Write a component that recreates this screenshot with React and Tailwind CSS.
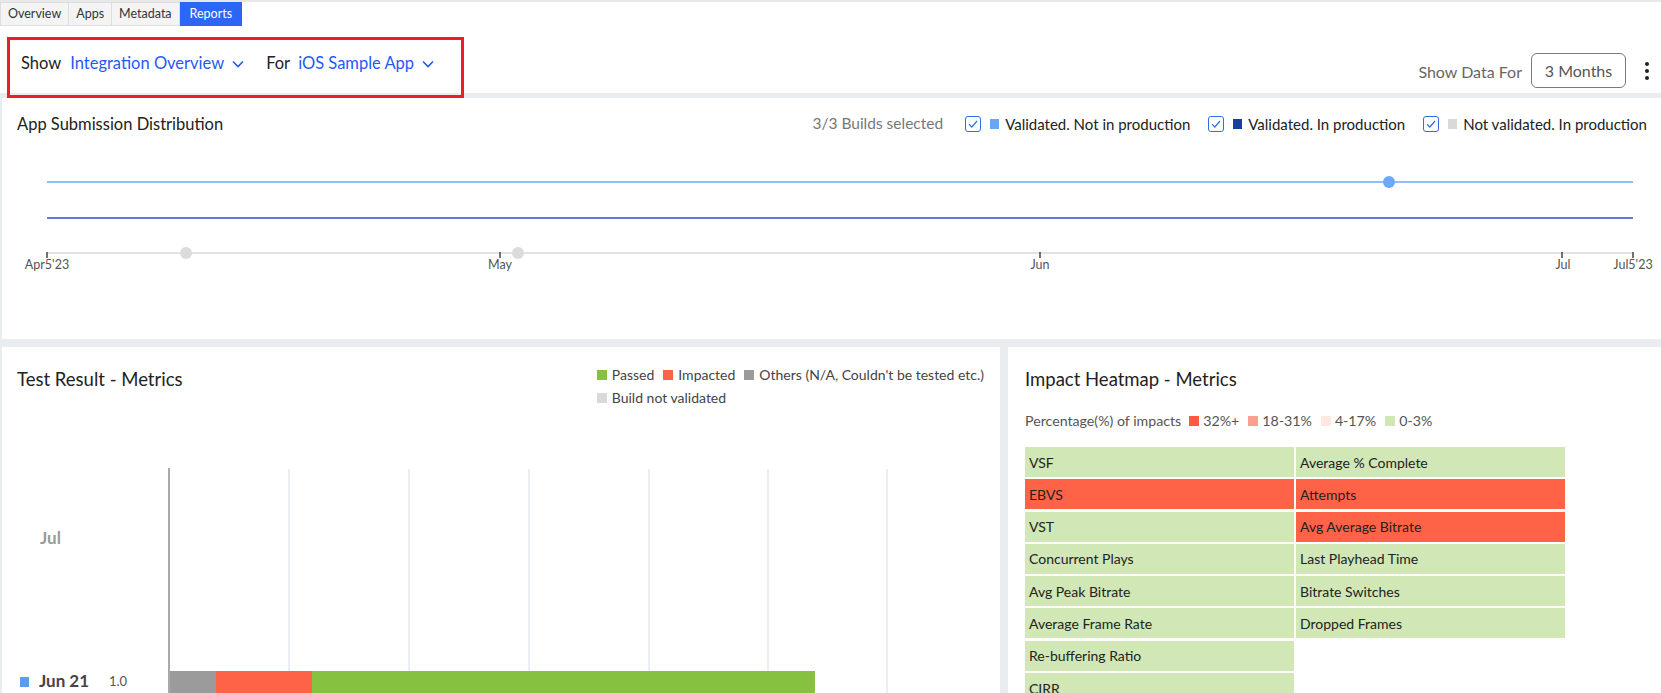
import React from "react";

function Chevron() {
  return (
    <svg width="12" height="8" viewBox="0 0 12 8" className="ml-[8px] mt-[2px]">
      <polyline points="1,1.5 6,6.5 11,1.5" fill="none" stroke="#1f5af5" strokeWidth="1.6" />
    </svg>
  );
}

function Check() {
  return (
    <div className="w-[16px] h-[16px] rounded-[3px] border border-[#2f6fe0] flex items-center justify-center bg-white">
      <svg width="10" height="8" viewBox="0 0 10 8">
        <polyline points="1,4.2 3.8,7 9,1" fill="none" stroke="#2f6fe0" strokeWidth="1.2" />
      </svg>
    </div>
  );
}

function LegendItem({ color, label }) {
  return (
    <div className="flex items-center">
      <Check />
      <span className={`w-[9px] h-[10px] ml-[9px] ${color}`}></span>
      <span className="ml-[6px] text-[15px] text-[#222]">{label}</span>
    </div>
  );
}

const cells = [
  ["VSF", "g"], ["Average % Complete", "g"],
  ["EBVS", "r"], ["Attempts", "r"],
  ["VST", "g"], ["Avg Average Bitrate", "r"],
  ["Concurrent Plays", "g"], ["Last Playhead Time", "g"],
  ["Avg Peak Bitrate", "g"], ["Bitrate Switches", "g"],
  ["Average Frame Rate", "g"], ["Dropped Frames", "g"],
  ["Re-buffering Ratio", "g"], [null, null],
  ["CIRR", "g"], [null, null],
];

export default function App() {
  const grid = [287, 407, 527, 647, 766, 885];
  return (
    <div className="w-[1661px] h-[693px] overflow-hidden bg-[#e9edf0] font-[Lato,'Noto_Sans',sans-serif] text-[#222] relative">
      {/* top area */}
      <div className="bg-white border-t-2 border-[#e6e8ea]">
        <div className="flex h-[24px] text-[12.5px]">
          <div className="px-[7px] flex items-center bg-[#f4f4f5] border border-[#dedede] text-[#333]">Overview</div>
          <div className="px-[7px] flex items-center bg-[#f4f4f5] border border-l-0 border-[#dedede] text-[#333]">Apps</div>
          <div className="px-[7px] flex items-center bg-[#f4f4f5] border border-l-0 border-[#dedede] text-[#333]">Metadata</div>
          <div className="px-[10px] flex items-center bg-[#2d66f6] text-white">Reports</div>
        </div>
        <div className="h-[67px] flex justify-between">
          <div className="flex items-center pl-[21px] pt-[25px] self-start text-[16.5px] leading-6">
            <span className="text-[#222]">Show</span>
            <span className="ml-[9px] text-[#1f5af5]">Integration Overview</span>
            <Chevron />
            <span className="ml-[22px] text-[#222]">For</span>
            <span className="ml-[8px] text-[#1f5af5]">iOS Sample App</span>
            <Chevron />
          </div>
          <div className="flex items-center self-start mt-[27px] pr-[12px]">
            <span className="text-[16px] text-[#666] mt-[2px]">Show Data For</span>
            <div className="ml-[9px] w-[95px] h-[35px] border border-[#7a7a7a] rounded-[6px] flex items-center justify-center text-[16px] text-[#555]">3 Months</div>
            <div className="ml-[19px] flex flex-col gap-[3px]">
              <span className="w-[4px] h-[4px] rounded-full bg-[#222]"></span>
              <span className="w-[4px] h-[4px] rounded-full bg-[#222]"></span>
              <span className="w-[4px] h-[4px] rounded-full bg-[#222]"></span>
            </div>
          </div>
        </div>
      </div>

      {/* App Submission Distribution */}
      <div className="mt-[5px] ml-[2px] h-[241px] bg-white">
        <div className="h-[52px] flex items-center justify-between pl-[15px] pr-[14px]">
          <span className="text-[16.5px]">App Submission Distribution</span>
          <div className="flex items-center gap-[18px]">
            <span className="text-[15.5px] text-[#777] mr-[4px]">3/3 Builds selected</span>
            <LegendItem color="bg-[#6aa6f8]" label="Validated. Not in production" />
            <LegendItem color="bg-[#173f9e]" label="Validated. In production" />
            <LegendItem color="bg-[#d9d9d9]" label="Not validated. In production" />
          </div>
        </div>
        <svg width="1659" height="189" className="block">
          <line x1="45" y1="32" x2="1631" y2="32" stroke="#93bdf8" strokeWidth="2" />
          <line x1="45" y1="68" x2="1631" y2="68" stroke="#5a7fd0" strokeWidth="2" />
          <line x1="45" y1="103" x2="1631" y2="103" stroke="#e3e3e3" strokeWidth="2" />
          {[45, 498, 1038, 1560, 1631].map((x) => (
            <line key={x} x1={x} y1="102" x2={x} y2="108" stroke="#444" strokeWidth="1.5" />
          ))}
          <circle cx="184" cy="103" r="6" fill="#dcdcdc" />
          <circle cx="516" cy="103" r="6" fill="#dcdcdc" />
          <circle cx="1387" cy="32" r="6" fill="#6ea8fc" />
          <g fontSize="12.5" fill="#555" textAnchor="middle">
            <text x="45" y="119">Apr5'23</text>
            <text x="498" y="119">May</text>
            <text x="1038" y="119">Jun</text>
            <text x="1561" y="119">Jul</text>
            <text x="1631" y="119">Jul5'23</text>
          </g>
        </svg>
      </div>

      {/* bottom panels */}
      <div className="flex mt-[8px] h-[346px]">
        <div className="ml-[2px] w-[998px] bg-white">
          <div className="h-[63px] flex justify-between pl-[15px] pr-[16px] pt-[16px]">
            <span className="mt-[4px] text-[18.5px] leading-6">Test Result - Metrics</span>
            <div className="flex flex-col items-start text-[14px] text-[#444] leading-[23px]">
              <div className="flex items-center">
                <span className="w-[10px] h-[10px] bg-[#86c13f]"></span>
                <span className="ml-[5px]">Passed</span>
                <span className="ml-[9px] w-[10px] h-[10px] bg-[#ff6347]"></span>
                <span className="ml-[5px]">Impacted</span>
                <span className="ml-[9px] w-[10px] h-[10px] bg-[#9b9b9b]"></span>
                <span className="ml-[5px]">Others (N/A, Couldn't be tested etc.)</span>
              </div>
              <div className="flex items-center">
                <span className="w-[10px] h-[10px] bg-[#d9d9d9]"></span>
                <span className="ml-[5px]">Build not validated</span>
              </div>
            </div>
          </div>
          <svg width="998" height="283" className="block">
            {grid.map((x) => (
              <line key={x} x1={x} y1="59" x2={x} y2="283" stroke="#e6e9f2" strokeWidth="1.5" />
            ))}
            <line x1="167" y1="58" x2="167" y2="283" stroke="#8c8c8c" strokeWidth="1.5" />
            <text x="38" y="134" fontSize="17" fontWeight="700" fill="#9a9a9a">Jul</text>
            <rect x="168" y="261" width="46" height="30" fill="#9b9b9b" />
            <rect x="214" y="261" width="96" height="30" fill="#ff6347" />
            <rect x="310" y="261" width="503" height="30" fill="#86c13f" />
            <rect x="18" y="267" width="9" height="10" fill="#5b9cf5" />
            <text x="37" y="277" fontSize="17" fontWeight="700" fill="#444">Jun 21</text>
            <text x="107" y="276" fontSize="13" fill="#555">1.0</text>
          </svg>
        </div>
        <div className="ml-[8px] flex-1 bg-white pl-[17px] pt-[20px]">
          <div className="text-[18.5px] leading-6">Impact Heatmap - Metrics</div>
          <div className="mt-[20px] h-[20px] flex items-center text-[14.2px] text-[#555]">
            <span>Percentage(%) of impacts</span>
            <span className="ml-[8px] w-[10px] h-[10px] bg-[#ff5a3c]"></span>
            <span className="ml-[4px]">32%+</span>
            <span className="ml-[9px] w-[10px] h-[10px] bg-[#f9a090]"></span>
            <span className="ml-[4px]">18-31%</span>
            <span className="ml-[9px] w-[10px] h-[10px] bg-[#fde8e4]"></span>
            <span className="ml-[4px]">4-17%</span>
            <span className="ml-[9px] w-[10px] h-[10px] bg-[#d1e7b6]"></span>
            <span className="ml-[4px]">0-3%</span>
          </div>
          <div className="mt-[16px] grid grid-cols-[269px_269px] gap-x-[2px] gap-y-[2.3px]">
            {cells.map(([label, c], i) => (
              <div
                key={i}
                className={`h-[30px] flex items-center pl-[4px] text-[14px] text-[#222] ${
                  c === "r" ? "bg-[#ff6347]" : c === "g" ? "bg-[#d1e7b6]" : ""
                }`}
              >
                {label}
              </div>
            ))}
          </div>
        </div>
      </div>

      {/* annotation box */}
      <div className="absolute left-[7px] top-[37px] w-[457px] h-[61px] border-[3px] border-[#e8202a] pointer-events-none"></div>
    </div>
  );
}
